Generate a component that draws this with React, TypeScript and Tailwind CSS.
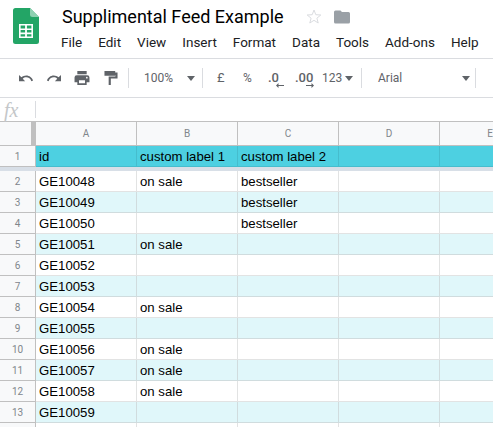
const rows = [
  ["GE10048", "on sale", "bestseller"],
  ["GE10049", "", "bestseller"],
  ["GE10050", "", "bestseller"],
  ["GE10051", "on sale", ""],
  ["GE10052", "", ""],
  ["GE10053", "", ""],
  ["GE10054", "on sale", ""],
  ["GE10055", "", ""],
  ["GE10056", "on sale", ""],
  ["GE10057", "on sale", ""],
  ["GE10058", "on sale", ""],
  ["GE10059", "", ""],
  ["", "", ""],
];

const menus = ["File", "Edit", "View", "Insert", "Format", "Data", "Tools", "Add-ons", "Help"];

function Caret() {
  return <svg width="10" height="5" viewBox="0 0 10 5" className="shrink-0"><path d="M1 0h8L5 5z" fill="#5f6368" /></svg>;
}

function Divider() {
  return <div className="h-[20px] w-px shrink-0 bg-[#dadce0]" />;
}

function SheetsLogo() {
  return (
    <svg width="26" height="36" viewBox="0 0 26 36" className="shrink-0">
      <path d="M2.500 0H17l9 9v24.500a2.500 2.500 0 0 1-2.500 2.500h-21A2.500 2.500 0 0 1 0 33.500v-31A2.500 2.500 0 0 1 2.500 0z" fill="#23a566" />
      <path d="M17 0l9 9h-6.500A2.500 2.500 0 0 1 17 6.500z" fill="#8ed1b1" />
      <path d="M6 16h14v14H6zm1.600 1.600v2.800h4.500v-2.800zm6.300 0v2.800h4.500v-2.800zm-6.300 4.400v2.600h4.500V22zm6.300 0v2.600h4.500V22zm-6.300 4.200v2.200h4.500v-2.200zm6.300 0v2.200h4.500v-2.200z" fill="#fff" fillRule="evenodd" />
    </svg>
  );
}

function Toolbar() {
  return (
    <div className="flex h-[39px] shrink-0 items-center border-b border-[#dadce0] pl-[18px] text-[12px] text-[#5f6368]">
      <svg width="16" height="7" viewBox="0 0 16 8" className="shrink-0"><path d="M8.300 0.500C6.200 0.500 4.300 1.300 2.800 2.600L0 0v7h7L4.300 4.300C5.400 3.300 6.800 2.700 8.300 2.700c2.700 0 5 1.800 5.800 4.300l2-.7C15 3 11.900 0.500 8.300 0.500z" fill="#5f6368" /></svg>
      <svg width="16" height="7" viewBox="0 0 16 8" className="ml-[12px] shrink-0"><path d="M7.700 0.500c2.100 0 4 .8 5.500 2.100L16 0v7H9l2.700-2.700C10.600 3.300 9.200 2.700 7.700 2.700c-2.700 0-5 1.800-5.800 4.300l-2-.7C1 3 4.100 0.500 7.700 0.500z" fill="#5f6368" /></svg>
      <svg width="16" height="14" viewBox="0 0 16 15" className="ml-[12px] shrink-0"><path d="M3 0h10v3.500H3zM2.400 4.500h11.200A2.400 2.400 0 0 1 16 6.900V12h-3v3H3v-3H0V6.900a2.400 2.400 0 0 1 2.400-2.400zM4.800 10v3.200h6.400V10zm8.400-3.800a.9.900 0 1 0 0 1.800.9.900 0 0 0 0-1.800z" fill="#5f6368" fillRule="evenodd" /></svg>
      <svg width="14" height="14" viewBox="0 0 14 15" className="ml-[14px] shrink-0"><path d="M0 0h11.500v1.500H14V8H6.800v7H4.500V5.900h7.200V4.200h-.2V5H0z" fill="#5f6368" /></svg>
      <div className="ml-[10px]"><Divider /></div>
      <span className="ml-[15px] w-[42px] font-['Roboto',sans-serif] text-[12px]">100%</span>
      <Caret />
      <div className="ml-[6px]"><Divider /></div>
      <span className="ml-[14px] w-[10px] font-['Roboto',sans-serif] text-[13px]">£</span>
      <span className="ml-[16px] w-[10px] font-['Roboto',sans-serif]">%</span>
      <span className="relative ml-[15px] w-[14px] font-['Roboto',sans-serif] text-[13px] font-medium">.0
        <svg width="8" height="5" viewBox="0 0 8 5" className="absolute left-[8px] top-[15px]"><path d="M8 2H2.500V0L0 2.500 2.500 5V3H8z" fill="#5f6368" /></svg>
      </span>
      <span className="relative ml-[13px] w-[18px] font-['Roboto',sans-serif] text-[13px] font-medium">.00
        <svg width="8" height="5" viewBox="0 0 8 5" className="absolute left-[11px] top-[15px]"><path d="M0 2h5.500V0L8 2.500 5.500 5V3H0z" fill="#5f6368" /></svg>
      </span>
      <span className="ml-[9px] w-[21px] font-['Roboto',sans-serif] text-[12px]">123</span>
      <span className="ml-[1px]"><Caret /></span>
      <div className="ml-[7px]"><Divider /></div>
      <span className="ml-[16px] w-[80px] font-['Roboto',sans-serif]">Arial</span>
      <span className="ml-[3px]"><Caret /></span>
      <div className="ml-[4px]"><Divider /></div>
    </div>
  );
}

function Row({ num, cells, head, tint }: { num?: number; cells: string[]; head?: boolean; tint?: boolean }) {
  const bg = head ? "bg-[#4dd0e1] border-[#46bdcd]" : tint ? "bg-[#e0f7fa] border-[#d0dcde]" : "bg-white border-[#e2e3e3]";
  return (
    <div className="flex h-[21px] shrink-0">
      <div className="flex w-[36px] shrink-0 items-center justify-center border-r border-b border-[#c0c0c0] bg-[#f8f9fa] font-['Roboto',sans-serif] text-[10px] text-[#80868b]">{num}</div>
      {[...cells, "", ""].map((c, i) => (
        <div key={i} className={`flex w-[101px] shrink-0 items-center overflow-hidden border-r border-b pt-[1px] pl-[3px] font-['Liberation_Sans',sans-serif] text-[13.200px] whitespace-nowrap text-black ${bg}`}>{c}</div>
      ))}
    </div>
  );
}

export default function App() {
  return (
    <div className="flex h-[427px] w-[493px] flex-col overflow-hidden bg-white">
      <div className="flex h-[59px] shrink-0 border-b border-[#dadce0] pl-[13px]">
        <div className="pt-[8px]"><SheetsLogo /></div>
        <div className="ml-[23px] flex flex-col pt-[3px]">
          <div className="flex h-[27px] items-center">
            <span className="font-['Roboto',sans-serif] text-[18px] whitespace-nowrap text-black">Supplimental Feed Example</span>
            <svg width="16" height="15" viewBox="0 0 16 15" className="ml-[22px] shrink-0"><path d="M8 1l1.800 4.700 5 .3-3.900 3.200 1.300 4.800L8 11.300 3.800 14l1.300-4.800L1.200 6l5-.3z" fill="none" stroke="#dadce0" /></svg>
            <svg width="16" height="14" viewBox="0 0 16 13" className="ml-[12px] shrink-0"><path d="M1.500 0H6.500l1.500 1.500h6.500A1.500 1.500 0 0 1 16 3v8.500a1.500 1.500 0 0 1-1.500 1.500h-13A1.500 1.500 0 0 1 0 11.500v-10A1.500 1.500 0 0 1 1.500 0z" fill="#9aa0a6" /></svg>
          </div>
          <div className="mt-[2px] -ml-[1px] flex gap-[16px] font-['Roboto',sans-serif] text-[13.500px] whitespace-nowrap text-[#202124]">
            {menus.map((m) => <span key={m}>{m}</span>)}
          </div>
        </div>
      </div>
      <Toolbar />
      <div className="flex h-[24px] shrink-0 items-center border-b border-[#c0c0c0]">
        <span className="w-[35px] pl-[4px] font-['Liberation_Serif',serif] text-[20px] text-[#c4c7c9] italic">fx</span>
        <div className="h-[17px] w-px bg-[#dadce0]" />
      </div>
      <div className="flex h-[24px] shrink-0">
        <div className="flex w-[36px] shrink-0 justify-end border-r border-b border-[#c0c0c0] bg-[#f8f9fa]">
          <div className="h-full w-[4px] bg-[#c0c0c0]" />
        </div>
        {["A", "B", "C", "D", "E"].map((c) => (
          <div key={c} className="flex w-[101px] shrink-0 items-center justify-center border-r border-b border-[#c0c0c0] bg-[#f8f9fa] font-['Roboto',sans-serif] text-[10px] text-[#80868b]">{c}</div>
        ))}
      </div>
      <Row num={1} cells={["id", "custom label 1", "custom label 2"]} head />
      <div className="h-[4px] shrink-0 bg-[#d8dfe7]" />
      {rows.map((r, i) => <Row key={i} num={r[0] ? i + 2 : undefined} cells={r} tint={i % 2 === 1} />)}
    </div>
  );
}
